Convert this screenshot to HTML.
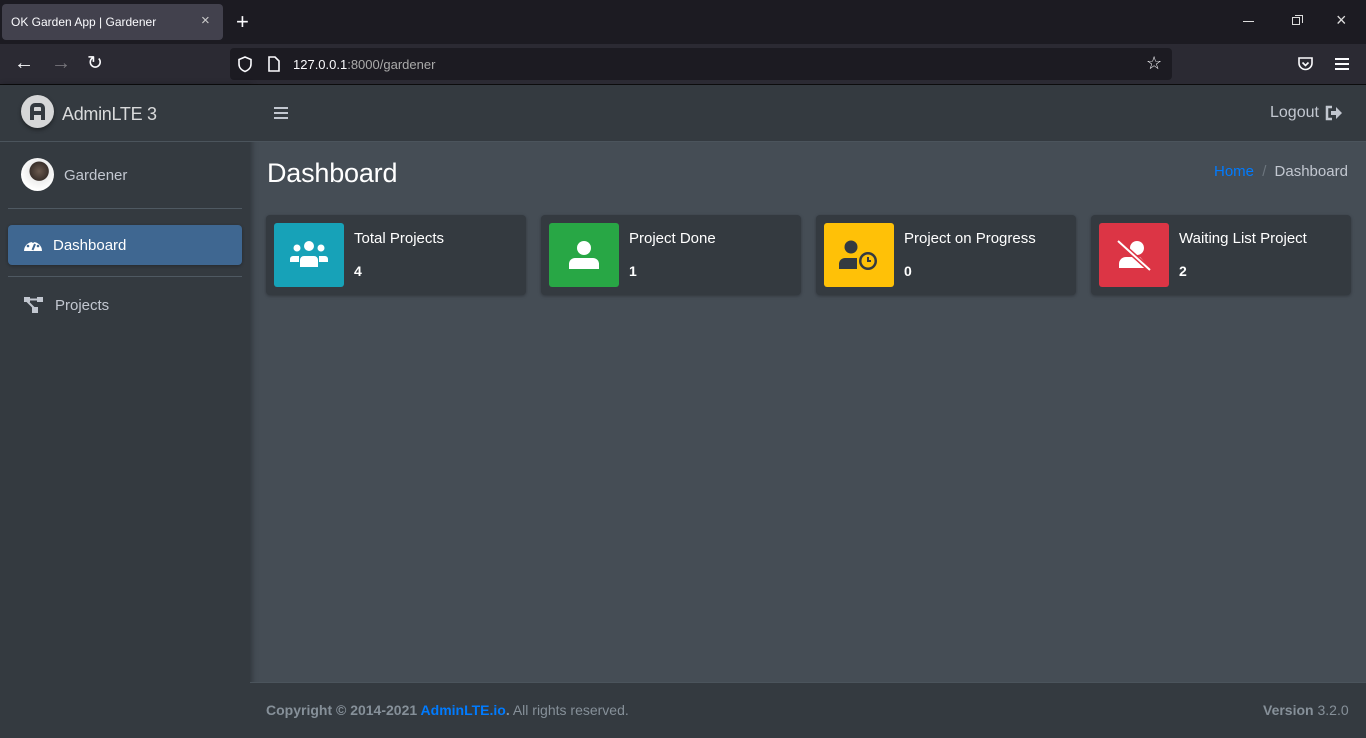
<!DOCTYPE html>
<html><head><meta charset="utf-8"><style>
*{margin:0;padding:0;box-sizing:border-box}
body{width:1366px;height:738px;overflow:hidden;background:#454d55;font-family:"Liberation Sans",sans-serif;position:relative;color:#fff}
.abs{position:absolute}
</style></head><body>
<div class="abs" style="left:0;top:0;width:1366px;height:44px;background:#1c1b22"></div>
<div class="abs" style="left:2px;top:4px;width:221px;height:36px;background:#42414d;border-radius:4px"></div>
<div class="abs" style="left:11px;top:15px;font-size:12px;color:#fbfbfe">OK Garden App | Gardener</div>
<div class="abs" style="left:201px;top:12px;font-size:15px;color:#ccc">×</div>
<div class="abs" style="left:236px;top:9px;font-size:22px;color:#fbfbfe;font-weight:300">+</div>
<div class="abs" style="left:1243px;top:21px;width:11px;height:1px;background:#ddd"></div>
<div class="abs" style="left:1292px;top:17px;width:8px;height:8px;border:1px solid #ddd"></div>
<div class="abs" style="left:1295px;top:15px;width:8px;height:8px;border-top:1px solid #ddd;border-right:1px solid #ddd"></div>
<div class="abs" style="left:1336px;top:10px;font-size:18px;color:#ddd">×</div>
<div class="abs" style="left:0;top:44px;width:1366px;height:40px;background:#2b2a33"></div>
<div class="abs" style="left:0;top:84px;width:1366px;height:1px;background:#0c0c0d"></div>
<div class="abs" style="left:14px;top:52px;font-size:20px;color:#fbfbfe">←</div>
<div class="abs" style="left:51px;top:52px;font-size:20px;color:#77767c">→</div>
<div class="abs" style="left:87px;top:52px;font-size:19px;color:#fbfbfe">↻</div>
<div class="abs" style="left:230px;top:48px;width:942px;height:32px;background:#1c1b22;border-radius:4px"></div>
<svg class="abs" style="left:237px;top:56px" width="16" height="17"><path d="M8 1L14 3.5V8c0 4-3 6.5-6 7.5C5 14.5 2 12 2 8V3.5Z" fill="none" stroke="#fbfbfe" stroke-width="1.6"/></svg>
<svg class="abs" style="left:267px;top:56px" width="14" height="16"><path d="M2 1h6l4 4v10H2Z" fill="none" stroke="#fbfbfe" stroke-width="1.6"/></svg>
<div class="abs" style="left:293px;top:57px;font-size:13px;color:#fbfbfe">127.0.0.1<span style="color:#aaa">:8000/gardener</span></div>
<div class="abs" style="left:1146px;top:53px;font-size:18px;color:#fbfbfe">☆</div>
<svg class="abs" style="left:1297px;top:56px" width="17" height="16"><path d="M2 2h13v5a6.5 6.5 0 0 1-13 0Z" fill="none" stroke="#fbfbfe" stroke-width="1.6"/><path d="M5.5 6.5l3 3 3-3" fill="none" stroke="#fbfbfe" stroke-width="1.6"/></svg>
<div class="abs" style="left:1335px;top:58px;width:14px;height:2px;background:#fbfbfe;box-shadow:0 5px 0 #fbfbfe,0 10px 0 #fbfbfe"></div>

<div class="abs" style="left:0;top:85px;width:250px;height:653px;background:#343a40;box-shadow:2px 0 6px rgba(0,0,0,.3)"></div>
<div class="abs" style="left:0;top:141px;width:250px;height:1px;background:#4b545c"></div>
<div class="abs" style="left:21px;top:95px;width:33px;height:33px;border-radius:50%;background:#d6d7d8;box-shadow:0 2px 4px rgba(0,0,0,.4)"></div>
<svg class="abs" style="left:21px;top:95px" width="33" height="33"><path d="M11 25V13a3 3 0 0 1 3-3h5a3 3 0 0 1 3 3v12M11 18h11" fill="none" stroke="#343a40" stroke-width="4"/></svg>
<div class="abs" style="left:62px;top:104px;font-size:18px;color:#d9dadb;letter-spacing:-0.3px">AdminLTE 3</div>
<div class="abs" style="left:21px;top:158px;width:33px;height:33px;border-radius:50%;background:radial-gradient(circle at 55% 40%,#6b5a4f 0,#3a302b 35%,#eee 37%,#fff 70%)"></div>
<div class="abs" style="left:64px;top:167px;font-size:15px;color:#c2c7d0">Gardener</div>
<div class="abs" style="left:8px;top:208px;width:234px;height:1px;background:#4f5962"></div>
<div class="abs" style="left:8px;top:225px;width:234px;height:40px;background:#3f6791;border-radius:4px;box-shadow:0 1px 3px rgba(0,0,0,.3)"></div>
<svg class="abs" style="left:23px;top:236px" width="20" height="16"><path d="M1 15A9 9 0 0 1 19 15Z" fill="#fff"/><circle cx="5" cy="10" r="1.3" fill="#3f6791"/><circle cx="15" cy="10" r="1.3" fill="#3f6791"/><circle cx="10" cy="5.5" r="1.3" fill="#3f6791"/><path d="M9.5 14L12 8" stroke="#3f6791" stroke-width="2"/></svg>
<div class="abs" style="left:53px;top:237px;font-size:15px;color:#fff">Dashboard</div>
<div class="abs" style="left:8px;top:276px;width:234px;height:1px;background:#4f5962"></div>
<svg class="abs" style="left:24px;top:297px" width="20" height="17"><rect x="0" y="0" width="6" height="5" fill="#c2c7d0"/><rect x="13" y="0" width="6" height="5" fill="#c2c7d0"/><rect x="8" y="10" width="6" height="6" fill="#c2c7d0"/><path d="M3 4L10 11M6 2.5H13" stroke="#c2c7d0" stroke-width="2"/></svg>
<div class="abs" style="left:55px;top:297px;font-size:15px;color:#c2c7d0">Projects</div>

<div class="abs" style="left:250px;top:85px;width:1116px;height:57px;background:#343a40;border-bottom:1px solid #4b545c"></div>
<div class="abs" style="left:274px;top:107px;width:14px;height:2px;background:#c2c7d0;box-shadow:0 5px 0 #c2c7d0,0 10px 0 #c2c7d0"></div>
<div class="abs" style="left:1270px;top:104px;font-size:16px;color:#c2c7d0">Logout</div>
<svg class="abs" style="left:1325px;top:105px" width="18" height="16"><path d="M7 2H2v12h5" fill="none" stroke="#c2c7d0" stroke-width="2.5"/><path d="M6 6h5V2l6 6-6 6v-4H6Z" fill="#c2c7d0"/></svg>

<div class="abs" style="left:267px;top:158px;font-size:27px;color:#fff;letter-spacing:-0.2px">Dashboard</div>
<div class="abs" style="left:1214px;top:163px;font-size:15px;color:#c2c7d0"><span style="color:#007bff">Home</span> <span style="color:#6c757d;padding:0 4px">/</span> Dashboard</div>

<div class="abs" style="left:266px;top:215px;width:260px;height:80px;background:#343a40;border-radius:4px;box-shadow:0 1px 3px rgba(0,0,0,.3)"></div>
<div class="abs" style="left:274px;top:223px;width:70px;height:64px;background:#17a2b8;border-radius:3px"></div>
<svg class="abs" style="left:289px;top:240px" width="40" height="30"><circle cx="20" cy="6" r="5" fill="#fff"/><circle cx="8" cy="8" r="3.5" fill="#fff"/><circle cx="32" cy="8" r="3.5" fill="#fff"/><path d="M11 27v-7a4 4 0 0 1 4-4h10a4 4 0 0 1 4 4v7Z M1 22v-3a3 3 0 0 1 3-3h6v6Z M39 22v-3a3 3 0 0 0-3-3h-6v6Z" fill="#fff"/></svg>
<div class="abs" style="left:354px;top:230px;font-size:15px">Total Projects</div>
<div class="abs" style="left:354px;top:263px;font-size:14px;font-weight:bold">4</div>

<div class="abs" style="left:541px;top:215px;width:260px;height:80px;background:#343a40;border-radius:4px;box-shadow:0 1px 3px rgba(0,0,0,.3)"></div>
<div class="abs" style="left:549px;top:223px;width:70px;height:64px;background:#28a745;border-radius:3px"></div>
<svg class="abs" style="left:568px;top:240px" width="32" height="30"><circle cx="16" cy="8" r="7" fill="#fff"/><path d="M1 29v-5a6 6 0 0 1 6-6h18a6 6 0 0 1 6 6v5Z" fill="#fff"/></svg>
<div class="abs" style="left:629px;top:230px;font-size:15px">Project Done</div>
<div class="abs" style="left:629px;top:263px;font-size:14px;font-weight:bold">1</div>

<div class="abs" style="left:816px;top:215px;width:260px;height:80px;background:#343a40;border-radius:4px;box-shadow:0 1px 3px rgba(0,0,0,.3)"></div>
<div class="abs" style="left:824px;top:223px;width:70px;height:64px;background:#ffc107;border-radius:3px"></div>
<svg class="abs" style="left:838px;top:239px" width="42" height="32"><circle cx="13" cy="8" r="6.5" fill="#343a40"/><path d="M1 30v-5a6 6 0 0 1 6-6h12v11Z" fill="#343a40"/><circle cx="30" cy="22" r="9" fill="#343a40"/><circle cx="30" cy="22" r="6.5" fill="#ffc107"/><path d="M30 18v4h3" stroke="#343a40" stroke-width="2" fill="none"/></svg>
<div class="abs" style="left:904px;top:230px;font-size:15px">Project on Progress</div>
<div class="abs" style="left:904px;top:263px;font-size:14px;font-weight:bold">0</div>

<div class="abs" style="left:1091px;top:215px;width:260px;height:80px;background:#343a40;border-radius:4px;box-shadow:0 1px 3px rgba(0,0,0,.3)"></div>
<div class="abs" style="left:1099px;top:223px;width:70px;height:64px;background:#dc3545;border-radius:3px"></div>
<svg class="abs" style="left:1116px;top:239px" width="38" height="32"><circle cx="21" cy="9" r="7" fill="#fff"/><path d="M3 29v-4a7 7 0 0 1 7-7h14l10 11Z" fill="#fff"/><path d="M2 2L34 31" stroke="#dc3545" stroke-width="5"/><path d="M2 2L34 31" stroke="#fff" stroke-width="2"/></svg>
<div class="abs" style="left:1179px;top:230px;font-size:15px">Waiting List Project</div>
<div class="abs" style="left:1179px;top:263px;font-size:14px;font-weight:bold">2</div>

<div class="abs" style="left:250px;top:682px;width:1116px;height:56px;background:#343a40;border-top:1px solid #4b545c"></div>
<div class="abs" style="left:266px;top:702px;font-size:14px;color:#869099"><b>Copyright © 2014-2021 <span style="color:#007bff">AdminLTE.io</span>.</b> All rights reserved.</div>
<div class="abs" style="left:1263px;top:702px;font-size:14px;color:#869099"><b>Version</b> 3.2.0</div>
</body></html>
